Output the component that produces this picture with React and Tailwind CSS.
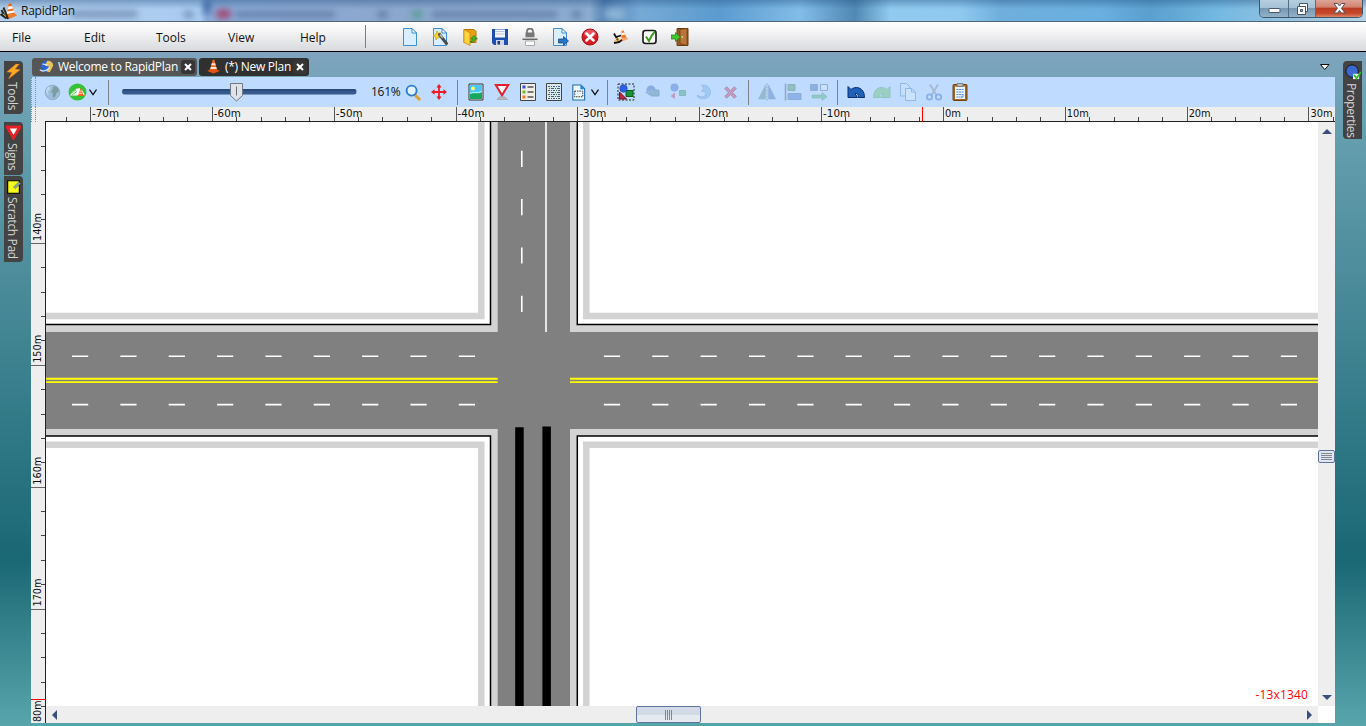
import React from "react";

const Svg = ({ s = 18, faded, children }) => (
  <svg width={s} height={s} viewBox="0 0 18 18" className={faded ? "shrink-0 opacity-35" : "shrink-0"}>
    {children}
  </svg>
);

const Cone = ({ s = 18 }) => (
  <Svg s={s}>
    <path d="M8 1h2l3.500 13h-9z" fill="#f26a1b" />
    <path d="M7 5h4l.7 2.500H6.300z M5.800 9.500h6.500l.7 2.500H5z" fill="#f7e3d6" />
    <path d="M1.500 14.500 4.500 12.500h9l3 2L9 17.500z" fill="#e0520d" />
  </Svg>
);

const Page = ({ children }) => (
  <>
    <path d="M2.500.5h8.500l4.500 4.500v12.500h-13z" fill="#d9efff" stroke="#3f8fd0" />
    <path d="M11 .5v4.500h4.500z" fill="#fff" stroke="#3f8fd0" />
    {children}
  </>
);

const menuIcons = [
  <Page />,
  <Page>
    <path d="m6 3 1.300 2.300L10 5 8.500 7.500 10 10l-3-.5L5 12l-.5-3L2 7.500l2.700-1z" fill="#f6d32f" stroke="#c7a626" strokeWidth=".8" />
    <path d="m8.500 6.500 7 9" stroke="#4c4c4c" strokeWidth="3" strokeLinecap="round" />
    <path d="m9 6.500 2.500 3.300" stroke="#bbb" strokeWidth="1.700" />
  </Page>,
  <>
    <path d="M3 1.500h10l2 2v11H3z" fill="#e8a011" stroke="#b87808" />
    <path d="m3 1.500 6 3.500v12.500L3 14.500z" fill="#ffd640" stroke="#c98a0a" strokeWidth=".8" />
    <path d="M9 14c4 .5 5-1 5-3h2.500L13 7.500 9.500 11h2c0 1.500-1 2-2.500 3z" fill="#42b52c" stroke="#207312" strokeWidth=".6" />
  </>,
  <>
    <path d="M1 1h16v16H3l-2-2z" fill="#1e4fae" />
    <path d="M4 1.500h10v8H4z" fill="#f2f6fb" />
    <path d="M4.500 3.500h9M4.500 6h9" stroke="#b7c4d6" />
    <path d="M5 12h8v5H5z" fill="#cdd6e4" />
    <path d="M6.500 13h2.500v3.500H6.500z" fill="#253a78" />
  </>,
  <>
    <path d="M6 6V3.500a3 3 0 0 1 6 0V6" fill="none" stroke="#777" strokeWidth="1.800" />
    <path d="M4.500 4.500h9v5h-9z" fill="#777" />
    <path d="M1.500 9.500h15v4.500h-15z" fill="#e2e2e2" />
    <path d="M1.500 11.300h15" stroke="#666" strokeWidth="1.400" />
    <path d="M4.500 13h9v4.500h-9z" fill="#fff" stroke="#aaa" />
  </>,
  <Page>
    <path d="M7.500 11h5V8.500L17.500 13l-5 4.500V15h-5z" fill="#2874c8" stroke="#123f7c" strokeWidth=".7" />
  </Page>,
  <>
    <circle cx="9" cy="9" r="8" fill="#d91c25" stroke="#a60e18" />
    <ellipse cx="9" cy="5.500" rx="6" ry="3.800" fill="#ee6970" opacity=".7" />
    <path d="m5.500 5.500 7 7m0-7-7 7" stroke="#fff" strokeWidth="2.500" strokeLinecap="round" />
  </>,
  <>
    <path d="m10.500 3 2-.8L15.500 10l-5 .5z" fill="#f27b2b" />
    <path d="m10.500 5 3-.5.8 2-3.800.8z" fill="#fff" />
    <path d="m9 11 7-1.500 1.500 1.500L11 13.500z" fill="#f5a56a" />
    <path d="M3 5.500 5 9l5-1.500M5 9l3 5-5 1m5-1 3-2" fill="none" stroke="#161310" strokeWidth="1.800" />
    <path d="m4.500 10.500 3.500.5M3.500 13l5-.5" stroke="#eba422" strokeWidth="1.200" />
  </>,
  <>
    <rect x="2" y="2.500" width="13" height="13" rx="2.500" fill="#fff" stroke="#161616" strokeWidth="1.600" />
    <path d="m5 8.500 3 4.500c1.500-4 3-6.500 6-9.500" fill="none" stroke="#3a9920" strokeWidth="2" />
  </>,
  <>
    <path d="M6 .5h11v17H6z" fill="#9c5a22" stroke="#6e3c12" />
    <path d="M9 1.500 16 .5v17L9 15.500z" fill="#b9753a" stroke="#6e3c12" strokeWidth=".7" />
    <path d="M10.500 9h1.500" stroke="#ffe08a" strokeWidth="1.500" />
    <path d="M0 7h4.500V4.500l5 4.500-5 4.500V11H0z" fill="#43c52f" stroke="#1c7a14" strokeWidth=".7" />
  </>,
];

const Cell = ({ w, children }) => (
  <div className={w + " flex h-full shrink-0 items-center justify-center"}>{children}</div>
);
const Sep = ({ w }) => (
  <Cell w={w}>
    <div className="h-[25px] w-px bg-[#7c8089]" />
  </Cell>
);
const Chevron = () => (
  <svg width="8" height="8" viewBox="0 0 8 8" className="shrink-0">
    <path d="m.5 1.500 3.500 5 3.500-5" fill="none" stroke="#111" strokeWidth="1.300" />
  </svg>
);

const Globe = () => (
  <Svg s={17}>
    <circle cx="9" cy="9" r="7.700" fill="#9cbcdc" stroke="#8fabc7" />
    <path d="M10 2.500c3 0 5.500 2 6 5L13 10l-2 5-2-2 .5-3L7.500 8l1.500-2z" fill="#7d9da0" />
    <path d="M2 7c1-3 3-4 5-4.500L6 6 4 8l1 3-1 1z" fill="#c4dbe6" />
  </Svg>
);
const Badge = () => (
  <svg width="19" height="18" viewBox="0 0 19 18" className="shrink-0">
    <ellipse cx="9.500" cy="9" rx="9" ry="8.600" fill="#35c234" />
    <path d="M2 12.500h14.500v-1.500c-1-1-2-4.500-4.500-5.500-2.500-.8-4 .5-5 1.500L4 9z" fill="#fff" />
    <path d="m3 10.500 5-3.500m-4 5 5-3.500" stroke="#5dcc58" />
    <path d="M12.300 5.500h1l2 6.500h-5z" fill="#ed641c" />
    <path d="M11.700 8h2.300M11 10.300h3.500" stroke="#fff" strokeWidth=".8" />
    <path d="M9.500 12.500h7" stroke="#ed641c" />
  </svg>
);

const view = [
  <>
    <path d="M2 1h14v16H2z" fill="#eef" stroke="#333" />
    <path d="M3 2h12v9H3z" fill="#49c8f5" />
    <circle cx="6" cy="5.500" r="2" fill="#fff36b" />
    <path d="M3 11c4-3 8 1 12-2v7H3z" fill="#16a85a" />
    <path d="M3 10.500c4-2 7 .5 12-2" stroke="#c8f3ff" fill="none" />
  </>,
  <>
    <path d="M2.800 2h12.400L9 12.300z" fill="#fff" stroke="#e3202b" strokeWidth="2" />
    <path d="M4 16.500 6 14h6l2.500 2.500z" fill="#bbb" stroke="#999" strokeWidth=".6" />
  </>,
  <>
    <path d="M1.500.5h15v17h-15z" fill="#f2efe8" stroke="#444" />
    <path d="M3.500 2.500h3v3h-3z" fill="#2b4fe0" />
    <path d="M3.500 7.500h3v3h-3z" fill="#67bd22" />
    <path d="M3.500 12.500h3v3h-3z" fill="#ef7a1d" />
    <path d="M8.500 4h6M8.500 9h6M8.500 14h6" stroke="#555" strokeWidth="1.500" />
  </>,
  <>
    <path d="M1.500.5h15v17h-15z" fill="#d9e7ee" stroke="#444" />
    <path d="M3 3.500h12M3 7.500h12M3 11.500h12M3 15.500h12" stroke="#46616f" strokeDasharray="2 1 1 1" />
    <path d="M4 5.500h11M4 9.500h11M4 13.500h11" stroke="#46616f" strokeDasharray="1 1 3 1" />
  </>,
];
const shapes = [
  [false, <>
    <path d="M1 1h16v16H1z" fill="none" stroke="#222" strokeDasharray="2 1.500" />
    <path d="M9 7.500h7v6H9z" fill="#179434" stroke="#0c5a1e" />
    <circle cx="6.500" cy="5.500" r="3.800" fill="#2c62de" stroke="#173a94" strokeWidth=".5" />
    <path d="M2.500 9v7h7z" fill="#bd2843" stroke="#711326" />
  </>],
  [true, <>
    <circle cx="8" cy="7" r="4.500" fill="#2858ae" />
    <path d="M8 7h8v6H8z" fill="#397983" stroke="#285c6b" />
    <path d="m2 9 5 4v-3h4V7H7z" fill="#4f6fa0" />
  </>],
  [true, <>
    <circle cx="5.500" cy="4.500" r="4" fill="#2c5ac5" />
    <path d="M10.500 7.500h6v5h-6z" fill="#229850" stroke="#286a48" />
    <path d="M6 9.500v6.500L1.500 13z" fill="#bd2857" />
  </>],
  [true, <path d="M2.500 12c3 2.500 8 2 8-1 0-2-2-3-4-2.500l2-3L6.500 2C12 1.500 16 5 15.500 10c-.5 5-7 8-13 4z" fill="#65a9e2" stroke="#3c75b9" strokeWidth=".7" />],
  [true, <path d="M2 4.500 4.500 2 9 6.500 13.500 2 16 4.500 11.500 9l4.500 4.500-2.500 2.500L9 11.500 4.500 16 2 13.500 6.500 9z" fill="#d01b46" stroke="#801533" strokeWidth="1.200" />],
];
const arrange = [
  <>
    <path d="M7.500 2v14H.5z" fill="#457f73" stroke="#57706b" strokeWidth=".6" />
    <path d="M10.500 2v14h7z" fill="#2c68c0" stroke="#436286" strokeWidth=".6" />
    <path d="M9 .5v17" stroke="#225a43" strokeDasharray="2 1" />
  </>,
  <>
    <path d="M1.500.5v17" stroke="#444" strokeWidth="1.500" />
    <path d="M4 1.500h7v6H4z" fill="#318c58" stroke="#355f49" />
    <path d="M4 10.500h13v6H4z" fill="#3569c4" stroke="#355993" />
  </>,
  <>
    <path d="M.5 1.500h7v6h-7z" fill="#315eae" stroke="#355993" />
    <path d="M10.500 1.500h7v6h-7z" fill="#dceaff" stroke="#355993" />
    <path d="M2 12h10V9.500l5 4-5 4V15H2z" fill="#31a85c" stroke="#286b44" strokeWidth=".6" />
  </>,
];
const edit = [
  [false, <path d="M1 3.500 4 6.500c4-3.500 11-2.500 13 4l.5 4h-6c0-3-1-4.500-3.500-4l2.500 4H1z" fill="#1e63b8" stroke="#0c2c74" />],
  [true, <path d="m17 3.500-3 3c-4-3.500-11-2.500-13 4l-.5 4h6c0-3 1-4.500 3.500-4l-2.500 4H17z" fill="#5cbb55" stroke="#3a9b53" />],
  [true, <>
    <path d="M1.500.5h6L11 4v9H1.500z" fill="#cfe6fb" stroke="#3a7dbd" />
    <path d="M6.500 5.500h6L16.500 9v8.500h-10z" fill="#e2f1ff" stroke="#3a7dbd" />
    <path d="M12.500 5.500V9h4" fill="none" stroke="#3a7dbd" />
  </>],
  [true, <>
    <path d="M5 1.500 12 13M13 1.500 6 13" stroke="#737d8b" strokeWidth="2" />
    <circle cx="4.500" cy="14" r="2.700" fill="none" stroke="#2666c0" strokeWidth="1.800" />
    <circle cx="13.500" cy="14" r="2.700" fill="none" stroke="#2666c0" strokeWidth="1.800" />
  </>],
  [false, <>
    <rect x="2" y="1.500" width="14" height="16" rx="1" fill="#a36722" stroke="#714514" />
    <path d="M4 3.500h10v12.500H4z" fill="#e9f4ff" />
    <path d="M6 .5h6v3H6z" fill="#b8b8b8" stroke="#666" strokeWidth=".7" />
    <path d="M5.500 6.500h7M5.500 9h7M5.500 11.500h7M5.500 14h4" stroke="#5288c4" strokeDasharray="2 .6" />
    <path d="M10 16v-3.500h4z" fill="#82b5e5" />
  </>],
];

const Tab = ({ w, bg, icon, label }) => (
  <div className={`${w} ${bg} flex h-[18px] items-center rounded-[3px] pl-[7px] pr-[2px] text-white`}>
    {icon}
    <span className="ml-[4px] whitespace-nowrap text-[12px] leading-[18px] tracking-[-0.27px]">{label}</span>
    <div className="ml-auto flex h-[14px] w-[14px] items-center justify-center rounded-[3px] bg-[#363636]">
      <svg width="8" height="8" viewBox="0 0 8 8"><path d="m1 1 6 6m0-6-6 6" stroke="#fff" strokeWidth="2" /></svg>
    </div>
  </div>
);

const SideTab = ({ h, icon, label, side }) => (
  <div className={`${h} ${side} flex w-[19px] flex-col items-center bg-[#434343] pt-[3px]`}>
    {icon}
    <span className="mr-[2px] mt-[3px] whitespace-nowrap text-[12px] leading-[17px] tracking-[-0.35px] text-[#d4d4d4] [writing-mode:vertical-rl]">{label}</span>
  </div>
);

const range = (n) => Array.from({ length: n }, (_, i) => i);
const STEP = 24.37;

const HRuler = () => (
  <svg width="1304" height="15" className="block shrink-0 bg-[#eeeeee] font-['DejaVu_Sans',sans-serif] text-[10px]">
    <path d="M.5 0v15M4.500 0v15" stroke="#888" strokeDasharray="1 1" />
    {range(53).map((i) => {
      const major = i % 5 === 1;
      const x = Math.floor(35.1 + i * STEP) + 0.5;
      return <path key={i} d={`M${x} ${major ? 0 : 10}V15`} stroke={major ? "#555" : "#444"} />;
    })}
    {range(11).map((i) => (
      <text key={i} x={61 + i * STEP * 5} y="10" textLength={i < 7 ? 27 : i === 7 ? 16 : 22} lengthAdjust="spacingAndGlyphs" fill="#111">{(i - 7) * 10}m</text>
    ))}
    <path d="M14 14.500H1304" stroke="#222" />
    <path d="M891.500 0v15" stroke="#f00" />
  </svg>
);

const VRuler = () => (
  <svg width="15" height="601" className="block shrink-0 bg-[#eeeeee] font-['DejaVu_Sans',sans-serif] text-[10px]">
    {range(25).map((i) => {
      const major = i % 5 === 4;
      const y = Math.floor(24 + i * STEP) + 0.5;
      return <path key={i} d={`M${major ? 0 : 10} ${y}H15`} stroke={major ? "#666" : "#444"} />;
    })}
    {range(4).map((i) => (
      <text key={i} transform={`translate(10 ${119 + i * STEP * 5}) rotate(-90)`} textLength="28" lengthAdjust="spacingAndGlyphs" fill="#111">{140 + i * 10}m</text>
    ))}
    <text transform="translate(10 600) rotate(-90)" textLength="21.500" lengthAdjust="spacingAndGlyphs" fill="#111">80m</text>
    <path d="M14.500 0V601" stroke="#222" />
    <path d="M0 577.500H15" stroke="#f00" />
  </svg>
);

const DASH = 48.35;
const Plan = () => (
  <svg width="1272" height="584" viewBox="46 122 1272 584" className="block bg-white">
    <g fill="none" stroke="#d3d3d3" strokeWidth="6.500">
      <path d="M46 316H481.300V122M1318 316H586.300V122M46 444.800H481.300V706M1318 444.800H586.300V706" />
    </g>
    <path d="M490.500 122H577.500V706H490.500z M46 324.500H1318V436H46z" fill="#d3d3d3" />
    <path d="M46 324.500H490.500V122M1318 324.500H577.300V122M46 436H490.500V706M1318 436H577.300V706" fill="none" stroke="#000" strokeWidth="1.500" />
    <path d="M497.700 122H570V706H497.700z M46 332H1318V429H46z" fill="#808080" />
    <path d="M46 378.700H497.700M46 382.100H497.700M570 378.700H1318M570 382.100H1318" stroke="#ffff00" strokeWidth="1.900" />
    <g stroke="#fff" strokeWidth="1.600">
      {range(9).map((i) => <path key={i} d={`M${72 + i * DASH} 356.200h16.200M${72 + i * DASH} 404.600h16.200`} />)}
      {range(15).map((i) => <path key={i} d={`M${603.900 + i * DASH} 356.200h16.200M${603.900 + i * DASH} 404.600h16.200`} />)}
      {range(4).map((i) => <path key={i} d={`M521.800 ${150.700 + i * DASH}v16.200`} />)}
      <path d="M546 122V332" />
    </g>
    <path d="M515.200 427.200h8.500V706h-8.500z M542.400 426.600h8.500V706h-8.500z" fill="#000" />
  </svg>
);

const Arrow = ({ d }) => <svg width="10" height="10" viewBox="0 0 10 10"><path d={d} fill="#3a4f7c" /></svg>;

export default function App() {
  return (
    <div className="flex h-[726px] w-[1366px] flex-col overflow-hidden font-['Open_Sans','Noto_Sans',sans-serif] text-[12px] text-[#111]">
      <header className="relative flex h-[21px] shrink-0 justify-between overflow-hidden bg-[linear-gradient(90deg,#b4cfec_0,#a9cbf0_200px,#8aabd8_207px,#8ba7cd_390px,#8baccf_590px,#517fb1_604px,#76aad5_640px,#5b9bcf_720px,#82bce8_800px,#4f88b2_855px,#91caef_890px,#8fc9ef_960px,#70afdd_1000px,#69afdf_1100px,#5a9fce_1150px,#74b9e2_1220px,#9bc3df_1300px,#b5d4e8_1366px)]">
        <div className="absolute inset-x-0 top-0 h-[9px] bg-[linear-gradient(180deg,rgba(35,80,130,0.4),rgba(35,80,130,0))]" />
        <div className="absolute left-[70px] top-[10px] h-[8px] w-[68px] rounded bg-[#5f7ca4]/60 blur-[3px]" />
        <div className="absolute left-[184px] top-[11px] h-[7px] w-[9px] bg-[#536c94]/60 blur-[3px]" />
        <div className="absolute left-[203px] top-0 h-[14px] w-[8px] bg-[#305d9a]/70 blur-[3px]" />
        <div className="absolute left-[216px] top-[9px] h-[10px] w-[15px] rounded bg-[#a83761]/80 blur-[3px]" />
        <div className="absolute left-[235px] top-[11px] h-[7px] w-[100px] bg-[#526d97]/60 blur-[3px]" />
        <div className="absolute left-[378px] top-[11px] h-[7px] w-[9px] bg-[#536c94]/70 blur-[3px]" />
        <div className="absolute left-[411px] top-[10px] h-[9px] w-[12px] rounded bg-[#619d9e] blur-[3px]" />
        <div className="absolute left-[432px] top-[11px] h-[7px] w-[125px] bg-[#526d97]/60 blur-[3px]" />
        <div className="absolute left-[572px] top-[11px] h-[7px] w-[9px] bg-[#536c94]/70 blur-[3px]" />
        <div className="absolute left-[604px] top-[9px] h-[10px] w-[20px] bg-[#a9cae7]/80 blur-[4px]" />
        <div className="relative flex items-center">
          <svg width="17" height="18" viewBox="0 0 17 18" className="mt-[1px]">
            <path d="m8.500 2 2.500-1 4 11-8 1z" fill="#ee6819" />
            <path d="m8.300 4.500 3.700-.5 1 2.500-5 1zM7 9.500l7-1 .8 2-8 1.500z" fill="#fff" />
            <path d="m5.500 13.500 9.500-2 2 2L9 17z" fill="#ef7e28" />
            <path d="M3.500 5.500 5 9l3 8M1.500 8l4 8M.5 12l6 4.500" stroke="#28271d" strokeWidth="2" fill="none" />
            <path d="m3 12 3 2.500" stroke="#d9c12c" />
          </svg>
          <span className="ml-[4px] tracking-[-0.25px]">RapidPlan</span>
        </div>
        <div className="relative mr-[3px] flex h-[18px] w-[104px] overflow-hidden rounded-b-[5px] border border-t-0 border-[#3f566a]">
          <div className="flex w-[29px] items-center justify-center border-r border-[#536d83] bg-[linear-gradient(180deg,#b6cedf_0,#a6c1d5_45%,#7897b1_50%,#92b2c9_100%)]">
            <svg width="13" height="6" className="mt-[4px]"><rect x="1" y=".5" width="11" height="4" rx="1" fill="#fff" stroke="#4a5769" /></svg>
          </div>
          <div className="flex w-[27px] items-center justify-center border-r border-[#536d83] bg-[linear-gradient(180deg,#b6cedf_0,#a6c1d5_45%,#7897b1_50%,#92b2c9_100%)]">
            <svg width="13" height="12" viewBox="0 0 13 12"><path d="M3.500.5h8v8h-8z" fill="#fff" stroke="#4a5769" /><path d="M1.500 3.500h8v8h-8z" fill="#fff" stroke="#4a5769" /><path d="M4.500 6.500h2v2h-2z" fill="#8ba5b9" stroke="#4a5769" /></svg>
          </div>
          <div className="flex flex-1 items-center justify-center bg-[linear-gradient(180deg,#dda598_0,#d1836f_42%,#b93b22_48%,#c74a2c_80%,#dc8765_100%)]">
            <svg width="13" height="11" viewBox="0 0 13 11"><path d="M1 .5h3.500l2 2.500 2-2.500H12L8.500 5.300 12 10H8.500l-2-2.500-2 2.500H1l3.500-4.700z" fill="#fff" stroke="#57515d" /></svg>
          </div>
        </div>
      </header>

      <nav className="flex h-[31px] shrink-0 items-center border-b border-t border-b-black border-t-[#536678] bg-[linear-gradient(180deg,#ffffff_0,#f4f4f5_35%,#d8d9dc_100%)]">
        <div className="flex w-[365px] shrink-0 pl-[12px] pt-[2px]">
          {["File", "Edit", "Tools", "View", "Help"].map((t) => <span key={t} className="w-[72px] shrink-0 last:w-[60px]">{t}</span>)}
        </div>
        <div className="h-[23px] w-px bg-[#7d7d7d]" />
        <div className="ml-[35px] flex gap-[12px]">
          {menuIcons.map((c, i) => <Svg key={i}>{c}</Svg>)}
        </div>
      </nav>

      <main className="flex min-h-0 flex-1 bg-[linear-gradient(180deg,#80a4c0_0,#77a3b9_25px,#669fb0_75px,#1a6874_508px,#59a5ac_674px)]">
        <aside className="flex w-[31px] shrink-0 flex-col pl-[4px] pt-[9px]">
          <SideTab h="h-[53px]" side="rounded-r-[4px]" label="Tools" icon={<Svg s={15}><path d="M12 0 1 9.500l6 .5-4 8L17 7l-6-1 5-6z" fill="#ffab24" stroke="#df7512" strokeWidth=".7" /></Svg>} />
          <div className="h-[8px]" />
          <SideTab h="h-[53px]" side="rounded-r-[4px]" label="Signs" icon={<Svg s={15}><path d="M1.500 2.500h15L9 15.500z" fill="#fff" stroke="#e42329" strokeWidth="3.600" /></Svg>} />
          <div className="h-px" />
          <SideTab h="h-[86px]" side="rounded-r-[4px]" label="Scratch Pad" icon={<Svg s={15}><path d="M2 2h14v15H2z" fill="#f7fa1b" stroke="#000" strokeWidth="1.300" /><path d="m9 9.500 6.500-6 2 2-6.500 6z" fill="#8aa98a" stroke="#568" strokeWidth=".7" /></Svg>} />
        </aside>

        <section className="flex w-[1304px] shrink-0 flex-col">
          <div className="flex h-[25px] shrink-0 items-center gap-[2px] pl-[1px] pt-[4px]">
            <Tab w="w-[165px]" bg="bg-[#565656]" label="Welcome to RapidPlan" icon={<Svg s={15}><circle cx="9" cy="9" r="7" fill="#2864d2" /><path d="M10 2c4 0 7 2 7 6l-4 8-4-1 3-6-5-1z" fill="#e8c35c" /><path d="M1 13c4 3 8 1 12-3M4 6l6 1" stroke="#d8e7ff" strokeWidth="1.500" fill="none" /></Svg>} />
            <Tab w="w-[110px]" bg="bg-[#303030]" label="(*) New Plan" icon={<Cone s={15} />} />
            <svg width="10" height="6" viewBox="0 0 10 6" className="ml-auto mr-[5px]"><path d="M.5.5h8.500L4.800 5.500z" fill="#fff" stroke="#111" /></svg>
          </div>

          <div className="flex h-[30px] shrink-0 items-center bg-[#bfdbff]">
            <div className="flex h-full w-[8px] gap-[3px]">
              <div className="h-full border-l border-dotted border-[#8191a8]" />
              <div className="h-full border-l border-dotted border-[#8191a8]" />
            </div>
            <Cell w="w-[26px]"><Globe /></Cell>
            <Cell w="w-[24px]"><Badge /></Cell>
            <Cell w="w-[8px]"><Chevron /></Cell>
            <Sep w="w-[23px]" />
            <Cell w="w-[237px]">
              <svg width="236" height="20" viewBox="0 0 236 20">
                <rect x="1" y="7" width="234.500" height="5.500" rx="2.700" fill="#365a8c" />
                <rect x="1.500" y="7" width="233.500" height="2" rx="1" fill="#25436f" opacity=".6" />
                <path d="M109.500 1.500h12v12l-6 5.500-6-5.500z" fill="#dfe2e6" stroke="#6e7886" />
                <path d="M115.500 4.500v9" stroke="#6b7078" />
              </svg>
            </Cell>
            <div className="w-[43px] pl-[14px] tracking-[-0.25px]">161%</div>
            <Cell w="w-[26px]"><Svg s={17}><path d="m10 11 6 6" stroke="#e0a030" strokeWidth="3" /><circle cx="7" cy="7" r="5.300" fill="#e3f4ff" stroke="#2d7dd2" strokeWidth="2" /></Svg></Cell>
            <Cell w="w-[26px]"><Svg s={16}><path d="M9 2v14M2 9h14" stroke="#ef1a26" strokeWidth="2" /><path d="m9 0 3 4H6zM9 18l3-4H6zM0 9l4-3v6zM18 9l-4-3v6z" fill="#ef1a26" /></Svg></Cell>
            <Sep w="w-[11px]" />
            {view.map((c, i) => <Cell key={i} w="w-[26px]"><Svg>{c}</Svg></Cell>)}
            <Cell w="w-[22px]"><Svg s={17}><path d="M3 1h8.500l4 4v12H3z" fill="#edf8ff" stroke="#1d6fb2" strokeWidth="1.200" /><path d="M11 1v4.500h4.500z" fill="#1d86c5" /><path d="M5 7.500h8.500v6H5z" fill="none" stroke="#222" strokeDasharray="1.500 1" /></Svg></Cell>
            <Cell w="w-[12px]"><Chevron /></Cell>
            <Sep w="w-[12px]" />
            {shapes.map(([f, c], i) => <Cell key={i} w="w-[26px]"><Svg s={i === 4 ? 15 : 18} faded={f}>{c}</Svg></Cell>)}
            <Sep w="w-[11px]" />
            {arrange.map((c, i) => <Cell key={i} w="w-[26px]"><Svg faded>{c}</Svg></Cell>)}
            <Sep w="w-[11px]" />
            {edit.map(([f, c], i) => <Cell key={i} w="w-[26px]"><Svg faded={f}>{c}</Svg></Cell>)}
          </div>

          <HRuler />
          <div className="flex h-[601px] shrink-0">
            <VRuler />
            <div className="flex w-[1289px] flex-col">
              <div className="flex h-[584px]">
                <div className="relative w-[1272px]">
                  <Plan />
                  <span className="absolute bottom-[3px] right-[10px] text-[12px] leading-[16px] tracking-[0.15px] text-[#ff0000]">-13x1340</span>
                </div>
                <div className="flex w-[17px] flex-col items-center bg-[#eeeeee] pb-[4px] pt-[4px]">
                  <Arrow d="M0 8h10L5 3z" />
                  <div className="mt-[314px] flex h-[13px] w-[17px] shrink-0 flex-col items-center justify-center gap-px rounded-[2px] border border-[#5f739f] bg-[#dfe6ee]">
                    {range(4).map((i) => <div key={i} className="h-px w-[11px] bg-[#7f8790]" />)}
                  </div>
                  <div className="mt-auto flex"><Arrow d="M0 3h10L5 8z" /></div>
                </div>
              </div>
              <div className="flex h-[17px] bg-white">
                <div className="flex w-[1272px] items-center bg-[#eeeeee] px-[4px]">
                  <Arrow d="M7 0v10L2 5z" />
                  <div className="ml-[576px] flex h-[17px] w-[65px] items-center justify-center gap-px rounded-[2px] border border-[#5f739f] bg-[linear-gradient(180deg,#d3dce6_0,#d0d9e4_50%,#e5e9f0_55%,#e5e9f0_100%)]">
                    {range(4).map((i) => <div key={i} className="h-[10px] w-px bg-[#7f8790]" />)}
                  </div>
                  <div className="ml-auto"><Arrow d="M3 0v10l5-5z" /></div>
                </div>
              </div>
            </div>
          </div>
        </section>

        <aside className="flex w-[31px] shrink-0 flex-col pl-[8px] pt-[9px]">
          <SideTab h="h-[78px]" side="rounded-l-[4px]" label="Properties" icon={<Svg s={16}><circle cx="8" cy="8" r="7" fill="#3d67d0" stroke="#111" /><path d="M9 11h7v6H9z" fill="#eee" /><path d="m10 12 3 4 5-7" stroke="#2dbb2c" strokeWidth="2" fill="none" /></Svg>} />
        </aside>
      </main>
    </div>
  );
}
